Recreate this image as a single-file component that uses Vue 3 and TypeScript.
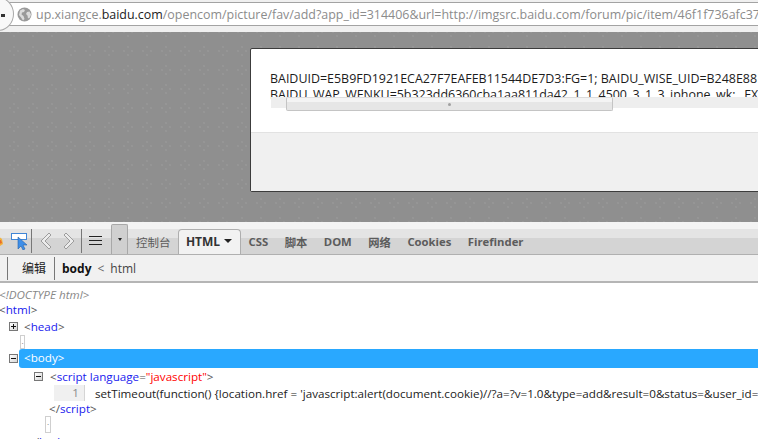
<script setup lang="ts">
const tabs = ['CSS', '脚本', 'DOM', '网络', 'Cookies', 'Firefinder']
</script>

<template>
  <div class="screen">
    <header class="chrome">
      <div class="backcap"><span class="backdash"></span></div>
      <div class="urlbar">
        <svg class="globe" width="15" height="15" viewBox="0 0 15 15">
          <circle cx="7.5" cy="7.5" r="7" fill="#9a9a9a" />
          <path d="M3 3.5l3-1.500 2 1-1 2-2 .5-.5 2 2 1.500 1 3-1.500 1.500-2-3-2-2.500zM10 5l2.500-.5 1.500 3-1 3-2 1-.5-3-1.500-1.500z" fill="#dcdcdc" />
        </svg>
        <span class="url">up.xiangce.<b>baidu.com</b>/opencom/picture/fav/add?app_id=314406&amp;url=http://imgsrc.baidu.com/forum/pic/item/46f1f736afc37</span>
      </div>
    </header>

    <main class="page">
      <section class="modal">
        <div class="modal-body">
          <div class="cookie">
            <p>BAIDUID=E5B9FD1921ECA27F7EAFEB11544DE7D3:FG=1; BAIDU_WISE_UID=B248E88</p>
            <p>BAIDU_WAP_WENKU=5b323dd6360cba1aa811da42_1_1_4500_3_1_3_iphone_wk; _EX</p>
            <div class="hscroll"><div class="thumb"><i></i></div></div>
          </div>
        </div>
        <div class="modal-foot"></div>
      </section>
    </main>

    <section class="devtools">
      <div class="toolbar">
        <div class="tools">
          <svg class="bug" width="8" height="16" viewBox="0 0 8 16"><path d="M0 4l3-1 4 3 1 5-3 2H0z" fill="#f2b23c" /><path d="M3 8l3-1 1 3-3 1z" fill="#e86a2a" /></svg>
          <svg class="inspect" width="18" height="18" viewBox="0 0 18 18">
            <rect x="1.500" y="1.500" width="15" height="6" fill="#fff" stroke="#3f85d6" />
            <path d="M8 5v12l3-3 2 4 2-1-2-4h4z" fill="#3f8fe8" stroke="#2561a8" stroke-width=".6" />
          </svg>
          <span class="sep"></span>
          <svg class="chev" width="12" height="18" viewBox="0 0 12 18"><path d="M9 1L1 9l8 8 2-2-6-6 6-6z" fill="#ececec" stroke="#9c9c9c" /></svg>
          <svg class="chev2" width="12" height="18" viewBox="0 0 12 18"><path d="M3 1l8 8-8 8-2-2 6-6-6-6z" fill="#ececec" stroke="#9c9c9c" /></svg>
          <span class="sep sep2"></span>
          <span class="lines"><i></i><i></i><i></i></span>
          <span class="dropbtn"><i></i></span>
        </div>
        <nav class="tabs">
          <span class="tab">控制台</span>
          <span class="tab active">HTML <i class="caret"></i></span>
          <span v-for="t in tabs" :key="t" class="tab">{{ t }}</span>
        </nav>
      </div>

      <div class="crumbs">
        <span class="cut"></span>
        <span class="edit">编辑</span>
        <span class="cut cut2"></span>
        <b>body</b><span class="lt">&lt;</span><span class="hc">html</span>
      </div>

      <div class="tree">
        <div class="row doctype">&lt;!DOCTYPE html&gt;</div>
        <div class="row r-html"><span class="br">&lt;</span><span class="tg">html</span><span class="br">&gt;</span></div>
        <div class="row r-head">
          <span class="box plus"></span>
          <span><span class="br">&lt;</span><span class="tg">head</span><span class="br">&gt;</span></span>
        </div>
        <div class="dots d1"><span>.</span></div>
        <div class="row r-body">
          <span class="box minus"></span>
          <div class="sel">&lt;body&gt;</div>
        </div>
        <div class="row r-script">
          <span class="box minus"></span>
          <span><span class="br">&lt;</span><span class="tg">script</span> <span class="tg">language</span><span class="br">=</span><span class="str">"javascript"</span><span class="br">&gt;</span></span>
        </div>
        <div class="row r-code">
          <span class="ln">1</span>
          <span class="code">setTimeout(function() {location.href = 'javascript:alert(document.cookie)//?a=?v=1.0&amp;type=add&amp;result=0&amp;status=&amp;user_id=1</span>
        </div>
        <div class="row r-end"><span class="br">&lt;/</span><span class="tg">script</span><span class="br">&gt;</span></div>
        <div class="dots d2"><span>.</span></div>
        <div class="row r-bend"><span class="br">&lt;/</span><span class="tg">body</span><span class="br">&gt;</span></div>
      </div>
    </section>
  </div>
</template>

<style>
html, body { margin: 0; padding: 0; overflow: hidden; }
</style>

<style scoped>
.screen {
  width: 758px;
  height: 439px;
  overflow: hidden;
  display: flex;
  flex-direction: column;
  font-family: "Open Sans", "Noto Sans CJK SC", sans-serif;
  background: #fff;
}
.chrome {
  height: 32px;
  flex: none;
  box-sizing: border-box;
  background: #f0f0f0;
  padding-top: 2px;
  position: relative;
}
.urlbar {
  height: 24px;
  box-sizing: border-box;
  background: #fff;
  border-top: 1px solid #a3a3a3;
  border-bottom: 1px solid #a3a3a3;
  display: flex;
  align-items: center;
  padding-left: 17px;
  gap: 4px;
  white-space: nowrap;
  overflow: hidden;
}
.globe { flex: none; }
.url { font-size: 12.450px; color: #8c8c8c; }
.url b { font-weight: 400; color: #222; }
.backcap {
  position: absolute;
  left: -18px;
  top: -3px;
  width: 30px;
  height: 32px;
  border-radius: 50%;
  background: #f8f8f8;
  border: 1px solid #a8a8a8;
  z-index: 1;
}
.backdash {
  position: absolute;
  left: 18px;
  top: 16px;
  width: 4px;
  height: 3px;
  background: #333;
}
.page {
  height: 190px;
  flex: none;
  background-color: #8f8f8f;
  background-image:
    radial-gradient(circle at 10px 5px, #969696 0.7px, transparent 1px),
    radial-gradient(circle at 6px 9px, #969696 0.7px, transparent 1px),
    radial-gradient(circle at 14px 9px, #969696 0.7px, transparent 1px),
    radial-gradient(circle at 10px 13px, #969696 0.7px, transparent 1px);
  background-size: 19px 19px;
  background-position: 4px 10px;
  padding: 16px 0 0 250px;
  box-sizing: border-box;
}
.modal {
  width: 560px;
  height: 144px;
  box-sizing: border-box;
  border: 1px solid #3c3c3c;
  background: #fff;
  border-radius: 2px;
  display: flex;
  flex-direction: column;
}
.modal-body {
  height: 84px;
  flex: none;
  box-sizing: border-box;
  border-bottom: 1px solid #e2e2e2;
  padding: 22px 0 0 19px;
}
.cookie {
  position: relative;
  height: 26px;
  font-size: 12.450px;
  line-height: 16px;
  color: #1c1c1c;
  white-space: nowrap;
}
.cookie p { margin: 0; }
.hscroll {
  position: absolute;
  left: 1px;
  right: 0;
  top: 26px;
  height: 11px;
  background: #eeeeee;
}
.thumb {
  position: absolute;
  left: 15px;
  top: 0;
  width: 327px;
  height: 14px;
  box-sizing: border-box;
  border: 1px solid #c4c4c4;
  border-top-color: #dcdcdc;
  border-radius: 2px;
  background: linear-gradient(#f4f4f4 0 35%, #e6e6e6 35% 100%);
}
.thumb i {
  position: absolute;
  left: 161px;
  top: 5px;
  width: 3px;
  height: 3px;
  border-radius: 50%;
  background: #a0a0a0;
}
.modal-foot { flex: 1; background: #f0f0f0; }

.devtools { flex: 1; min-height: 0; display: flex; flex-direction: column; }
.toolbar {
  height: 33px;
  flex: none;
  box-sizing: border-box;
  display: flex;
  align-items: flex-end;
  border-bottom: 1px solid #b0b0b0;
  background: linear-gradient(#f3f3f3 0 7px, #e4e4e4 7px 16px, #d4d4d4 16px 100%);
  overflow: hidden;
}
.tools { display: flex; align-items: center; height: 27px; flex: none; width: 136px; }
.bug { margin-left: -5px; flex: none; }
.inspect { margin-left: 7px; flex: none; }
.sep { width: 1px; height: 24px; background: #777; margin-left: 3px; flex: none; }
.chev { margin-left: 8px; flex: none; }
.chev2 { margin-left: 11px; flex: none; }
.sep2 { margin-left: 6px; }
.lines {
  display: flex;
  flex-direction: column;
  gap: 3px;
  margin-left: 7px;
  width: 13px;
  flex: none;
}
.lines i { height: 1px; background: #222; display: block; }
.dropbtn {
  margin-left: 9px;
  width: 17px;
  height: 30px;
  align-self: flex-end;
  box-sizing: border-box;
  border: 1px solid #a8a8a8;
  border-bottom: 0;
  border-radius: 2px 2px 0 0;
  background: #d0d0d0;
  display: flex;
  align-items: center;
  justify-content: center;
  flex: none;
}
.dropbtn i {
  width: 0;
  height: 0;
  border-left: 2.500px solid transparent;
  border-right: 2.500px solid transparent;
  border-top: 3px solid #222;
}
.tabs {
  display: flex;
  align-items: flex-end;
  font-size: 11.300px;
  font-weight: 700;
  color: #5c5c5c;
  white-space: nowrap;
}
.tab {
  display: flex;
  align-items: center;
  height: 23px;
  box-sizing: border-box;
  padding: 0 0 2px;
  margin-right: 16.500px;
}
.tab:first-child { font-weight: 400; font-size: 11.500px; margin-right: 7px; }
.tab.active {
  height: 25px;
  width: 63px;
  justify-content: center;
  gap: 4px;
  padding: 0 0 2px;
  margin-right: 8px;
  background: #f2f2f2;
  border: 1px solid #aeaeae;
  border-bottom: 0;
  border-radius: 4px 4px 0 0;
  color: #333;
  font-size: 12px;
}
.caret {
  width: 0;
  height: 0;
  border-left: 4px solid transparent;
  border-right: 4px solid transparent;
  border-top: 4px solid #222;
}
.crumbs {
  height: 28px;
  flex: none;
  box-sizing: border-box;
  background: #f1f1f1;
  border-bottom: 2px solid #b5b5b5;
  display: flex;
  align-items: center;
  font-size: 12px;
  color: #333;
  padding-left: 7px;
}
.cut { width: 1px; height: 23px; background: #777; flex: none; }
.cut2 { margin-right: 7px; }
.edit { margin: 0 8px 0 14px; color: #222; }
.crumbs b { font-weight: 700; color: #111; }
.lt { margin: 0 6px; color: #666; }
.hc { color: #444; }

.tree {
  flex: 1;
  min-height: 0;
  overflow: hidden;
  font-size: 11.650px;
  background: #fff;
  padding-top: 3px;
  white-space: nowrap;
}
.row { display: flex; align-items: center; }
.br { color: #555; }
.tg { color: #1a1aee; }
.str { color: #f00; }
.doctype { height: 16px; font-style: italic; color: #888; margin-left: -1px; }
.r-html { height: 15px; margin-left: -1px; }
.r-head { height: 18px; padding-left: 9px; gap: 6px; }
.box {
  width: 9px;
  height: 9px;
  box-sizing: border-box;
  border: 1px solid #777;
  background: linear-gradient(135deg, #fff, #d6d6d6);
  position: relative;
  flex: none;
}
.box::before {
  content: "";
  position: absolute;
  left: 1px;
  right: 1px;
  top: 3px;
  height: 1px;
  background: #111;
}
.plus::after {
  content: "";
  position: absolute;
  top: 1px;
  bottom: 1px;
  left: 3px;
  width: 1px;
  background: #111;
}
.dots {
  box-sizing: border-box;
  width: 5px;
  border: 1px solid #cfcfcf;
  font-size: 8px;
  line-height: 9px;
  color: #777;
  text-align: center;
  overflow: hidden;
}
.d1 { height: 14px; margin-left: 20px; }
.r-body { height: 19px; padding-left: 9px; }
.sel {
  flex: 1;
  margin-left: 1px;
  height: 19px;
  line-height: 18px;
  background: #29a8ff;
  color: #fff;
  padding-left: 5px;
  border-radius: 3px 0 0 3px;
}
.r-script { height: 17px; padding-left: 34px; gap: 7px; }
.r-code { height: 16px; padding-left: 54px; }
.ln {
  width: 31px;
  height: 16px;
  box-sizing: border-box;
  background: #f0f0f0;
  border-right: 1px solid #d5d5d5;
  color: #888;
  text-align: right;
  padding-right: 5px;
  line-height: 16px;
  flex: none;
}
.code { margin-left: 10px; color: #222; }
.r-end { height: 15px; padding-left: 49px; }
.d2 { height: 17px; width: 6px; margin-left: 45px; }
.r-bend { height: 15px; padding-left: 28px; padding-top: 1px; }
</style>
